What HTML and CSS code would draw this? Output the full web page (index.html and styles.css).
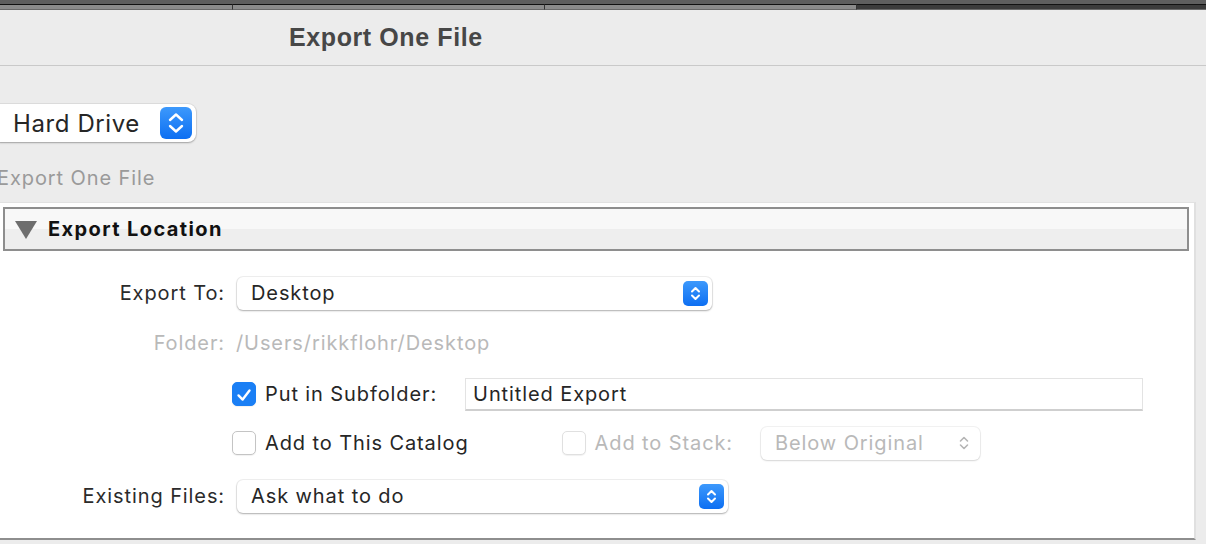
FILE: index.html
```html
<!DOCTYPE html>
<html lang="en">
  <head>
    <meta charset="UTF-8" />
    <meta name="viewport" content="width=device-width, initial-scale=1.0" />
    <title>Export One File</title>
    <link rel="stylesheet" href="styles.css">
  </head>
  <body>
    <div class="tabs">
      <div class="tab"></div>
      <div class="tab"></div>
      <div class="tab"></div>
      <div class="tab tab-dark"></div>
    </div>
    <div class="titlebar">
      <h1>Export One File</h1>
    </div>

    <div class="dest">
      <div class="popup popup-big">
        <span>Hard Drive</span>
        <span class="stepper stepper-big">
          <svg viewBox="0 0 32 32" width="32" height="32"><path d="M10 13 L16 7.5 L22 13 M10 19 L16 24.5 L22 19" fill="none" stroke="#fff" stroke-width="2.4" stroke-linecap="round" stroke-linejoin="round"/></svg>
        </span>
      </div>
    </div>
    <div class="preset">Export One File</div>

    <section class="panel">
      <div class="panel-head">
        <svg class="arrow" viewBox="0 0 22 18" width="22" height="18"><path d="M0 0 H22 L11 18 Z" fill="#6e6e6e"/></svg>
        <span>Export Location</span>
      </div>

      <div class="form">
        <div class="row row-first">
          <label class="label">Export To:</label>
          <div class="popup popup-wide">
            <span>Desktop</span>
            <span class="stepper">
              <svg viewBox="0 0 25 25" width="25" height="25"><path d="M9 10.5 L12.5 7 L16 10.5 M9 14.5 L12.5 18 L16 14.5" fill="none" stroke="#fff" stroke-width="2" stroke-linecap="round" stroke-linejoin="round"/></svg>
            </span>
          </div>
        </div>

        <div class="row row-folder">
          <label class="label dim">Folder:</label>
          <span class="dim path">/Users/rikkflohr/Desktop</span>
        </div>

        <div class="row row-sub">
          <span class="check checked">
            <svg viewBox="0 0 24 24" width="24" height="24"><path d="M6 12.5 L10.5 17 L18 7" fill="none" stroke="#fff" stroke-width="2.6" stroke-linecap="round" stroke-linejoin="round"/></svg>
          </span>
          <span class="check-text">Put in Subfolder:</span>
          <div class="field">Untitled Export</div>
        </div>

        <div class="row row-cat">
          <span class="check"></span>
          <span class="check-text">Add to This Catalog</span>
          <span class="check check-off stack-check"></span>
          <span class="check-text dim">Add to Stack:</span>
          <div class="popup popup-off">
            <span>Below Original</span>
            <svg class="small-chev" viewBox="0 0 12 20" width="12" height="20"><path d="M2.5 8 L6 4.5 L9.5 8 M2.5 12 L6 15.5 L9.5 12" fill="none" stroke="#b5b5b5" stroke-width="1.6" stroke-linecap="round" stroke-linejoin="round"/></svg>
          </div>
        </div>

        <div class="row row-exist">
          <label class="label">Existing Files:</label>
          <div class="popup popup-exist">
            <span>Ask what to do</span>
            <span class="stepper">
              <svg viewBox="0 0 25 25" width="25" height="25"><path d="M9 10.5 L12.5 7 L16 10.5 M9 14.5 L12.5 18 L16 14.5" fill="none" stroke="#fff" stroke-width="2" stroke-linecap="round" stroke-linejoin="round"/></svg>
            </span>
          </div>
        </div>
      </div>
    </section>
  </body>
</html>
```

FILE: styles.css
```css
* {
  margin: 0;
  padding: 0;
  box-sizing: border-box;
}

html,
body {
  height: 100%;
  width: 100%;
  overflow: hidden;
}

body {
  background: #ececec;
  font-family: Inter, "Liberation Sans", sans-serif;
  color: #262626;
  letter-spacing: 0.9px;
}

.tabs {
  display: flex;
  height: 10px;
  background: #5e5e5e;
  padding-top: 4px;
}

.tab {
  width: 312px;
  height: 6px;
  background: #8b8b8b;
  border-top: 1px solid #111;
  border-bottom: 1px solid #6a6a6a;
  border-right: 1px solid #333;
}

.tab:first-child {
  width: 233px;
}

.tab-dark {
  flex: 1;
  background: #3b3b3b;
  border-right: 0;
}

.titlebar {
  height: 56px;
  border-bottom: 1px solid #c9c9c9;
  padding-left: 289px;
  display: flex;
  align-items: center;
}

.titlebar h1 {
  font-family: "Liberation Sans", sans-serif;
  font-size: 25px;
  font-weight: bold;
  color: #474747;
  letter-spacing: 0.6px;
}

.dest {
  padding-top: 38px;
}

.popup {
  background: #fff;
  border-radius: 6px;
  box-shadow: 0 0 0 1px rgba(0, 0, 0, 0.06), 0 1px 2px rgba(0, 0, 0, 0.28);
  display: flex;
  align-items: center;
  justify-content: space-between;
  font-size: 20px;
  color: #262626;
}

.popup-big {
  width: 203px;
  height: 38px;
  margin-left: -7px;
  padding: 0 4px 0 20px;
  border-radius: 8px;
  font-size: 24px;
  letter-spacing: 0.6px;
}

.stepper {
  width: 25px;
  height: 25px;
  border-radius: 5px;
  background: linear-gradient(#3d99fc, #0d6ff2);
  display: flex;
}

.stepper-big {
  width: 32px;
  height: 32px;
  border-radius: 6px;
}

.preset {
  margin-top: 23px;
  margin-left: -3px;
  font-size: 20px;
  color: #9a9a9a;
  height: 26px;
  line-height: 26px;
}

.panel {
  margin-top: 11px;
  width: 1196px;
  background: #fff;
  border-top: 1px solid #e2e2e2;
  border-right: 2px solid #e0e0e0;
  border-bottom: 2px solid #8e8e8e;
  padding: 4px 5px 25px 3px;
}

.panel-head {
  height: 44px;
  border: 2px solid #8e8e8e;
  background: linear-gradient(#f8f8f8 0, #f8f8f8 50%, #eeeeee 50%, #eeeeee 100%);
  display: flex;
  align-items: center;
  padding-left: 10px;
  font-size: 20px;
  font-weight: bold;
  color: #111;
  letter-spacing: 1.4px;
}

.arrow {
  margin-right: 11px;
  margin-top: 2px;
}

.form {
  padding-top: 25px;
}

.row {
  display: flex;
  align-items: center;
  height: 34px;
  font-size: 20px;
}

.row-folder {
  margin-top: 16px;
}

.row-sub {
  margin-top: 17px;
}

.row-cat {
  margin-top: 15px;
}

.row-exist {
  margin-top: 19px;
}

.label {
  width: 234px;
  text-align: right;
  padding-right: 12px;
  color: #2b2b2b;
}

.dim {
  color: #b9b9b9;
}

.path {
  margin-left: -1px;
}

.popup-wide {
  width: 475px;
  height: 33px;
  padding: 0 4px 0 14px;
}

.popup-exist {
  width: 491px;
  height: 33px;
  padding: 0 4px 0 14px;
}

.check {
  width: 24px;
  height: 24px;
  border-radius: 5px;
  background: #fff;
  border: 1px solid #c4c4c4;
  box-shadow: 0 1px 1px rgba(0, 0, 0, 0.06);
  margin-left: 229px;
  display: flex;
}

.checked {
  background: #1a7ff5;
  border-color: #1a7ff5;
}

.check-off {
  border-color: #e0e0e0;
}

.stack-check {
  margin-left: 93px;
}

.check-text {
  margin-left: 9px;
}

.field {
  margin-left: 28px;
  width: 678px;
  height: 33px;
  border: 1px solid #e3e3e3;
  border-bottom: 2px solid #cfcfcf;
  padding-left: 7px;
  display: flex;
  align-items: center;
}

.popup-off {
  margin-left: 28px;
  width: 219px;
  height: 33px;
  padding: 0 10px 0 14px;
  color: #b9b9b9;
  box-shadow: 0 0 0 1px rgba(0, 0, 0, 0.05), 0 1px 2px rgba(0, 0, 0, 0.12);
}
```
